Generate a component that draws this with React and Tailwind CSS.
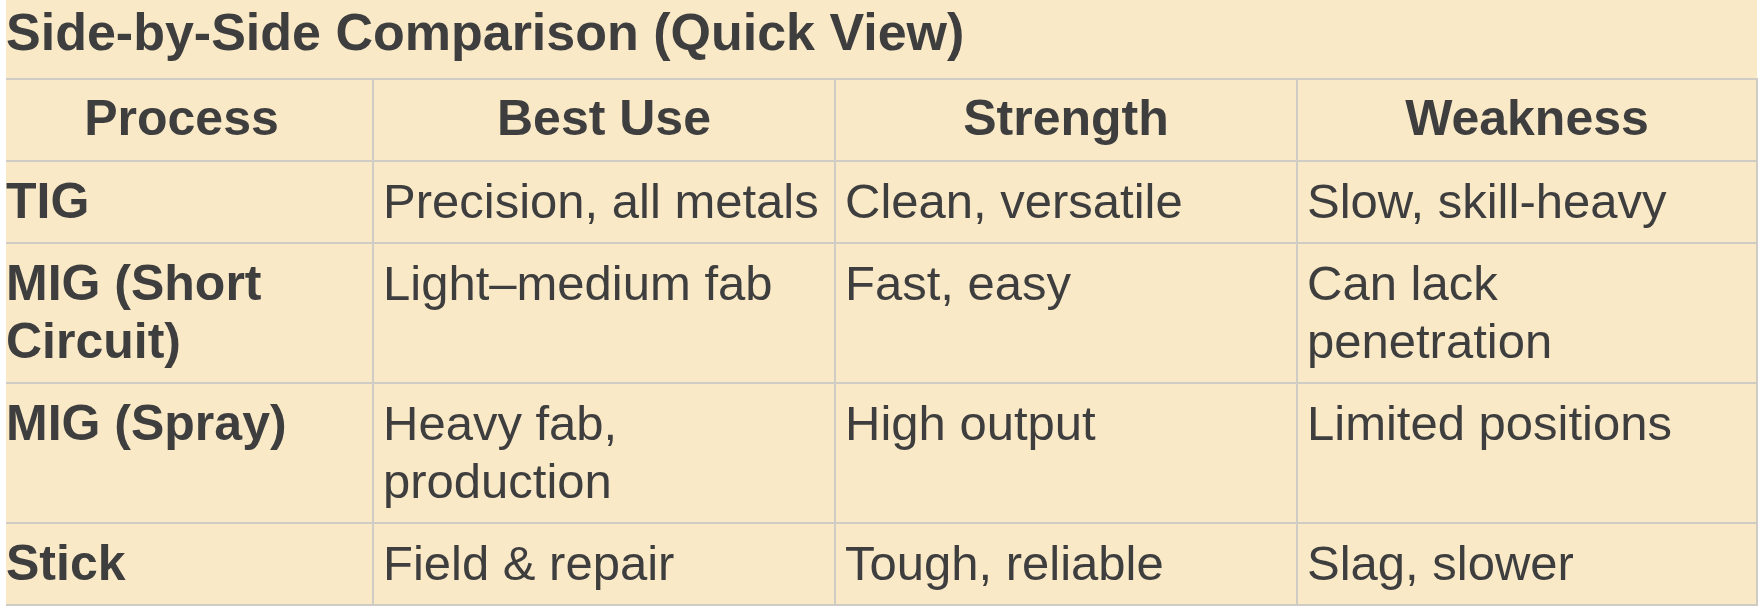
const rows = [
  { process: ["TIG"], use: ["Precision, all metals"], strength: ["Clean, versatile"], weakness: ["Slow, skill-heavy"] },
  { process: ["MIG (Short", "Circuit)"], use: ["Light–medium fab"], strength: ["Fast, easy"], weakness: ["Can lack", "penetration"] },
  { process: ["MIG (Spray)"], use: ["Heavy fab,", "production"], strength: ["High output"], weakness: ["Limited positions"] },
  { process: ["Stick"], use: ["Field & repair"], strength: ["Tough, reliable"], weakness: ["Slag, slower"] },
];

// renders wrapped lines the way the source shows them
const Lines = ({ lines }) =>
  lines.map((l, i) => (
    <span key={i} className="block">
      {l}
    </span>
  ));

export default function App() {
  return (
    <div className="w-[1760px] h-[612px] bg-white font-['Liberation_Sans',Arial,sans-serif] text-[#3e3e3e]">
      <div className="ml-[6px] w-[1751px] bg-[#f9e9c7]">
        {/* Title */}
        <h2 className="h-[78px] text-[52px] leading-[64px] font-bold whitespace-nowrap">
          Side-by-Side Comparison (Quick View)
        </h2>

        {/* Table */}
        <table className="w-[1751px] table-fixed border-collapse">
          <colgroup>
            <col className="w-[367px]" />
            <col className="w-[462px]" />
            <col className="w-[462px]" />
            <col className="w-[460px]" />
          </colgroup>
          <thead>
            <tr className="border-t-2 border-[#cfccc5]">
              {["Process", "Best Use", "Strength", "Weakness"].map((h, i) => (
                <th
                  key={h}
                  className={`pt-[9px] pb-[13px] text-[50px] leading-[58px] font-bold text-center border-2 border-[#cfccc5] ${
                    i === 0 ? "border-l-0 pr-[15px]" : ""
                  }`}
                >
                  {h}
                </th>
              ))}
            </tr>
          </thead>
          <tbody>
            {rows.map((r) => (
              <tr key={r.process[0]}>
                <td className="pl-0 pr-[10px] pt-[10px] pb-[12px] align-top text-[50px] leading-[58px] font-bold border-2 border-l-0 border-[#cfccc5]">
                  <Lines lines={r.process} />
                </td>
                {[r.use, r.strength, r.weakness].map((c, i) => (
                  <td
                    key={i}
                    className="px-[9px] pt-[10px] pb-[12px] align-top text-[49px] leading-[58px] whitespace-nowrap border-2 border-[#cfccc5]"
                  >
                    <Lines lines={c} />
                  </td>
                ))}
              </tr>
            ))}
          </tbody>
        </table>
      </div>
    </div>
  );
}
